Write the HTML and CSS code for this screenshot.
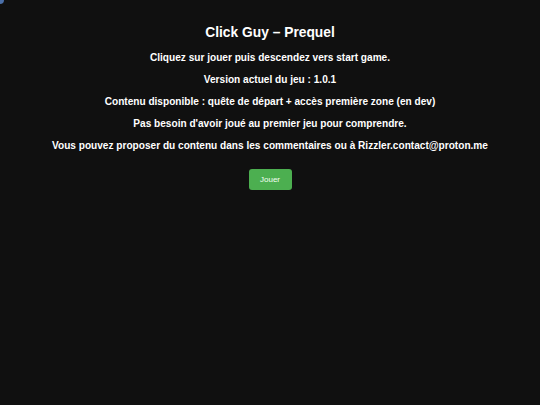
FILE: index.html
```html
<!DOCTYPE html>
<html lang="fr">
<head>
<meta charset="utf-8">
<title>Click Guy – Prequel</title>
<link rel="stylesheet" href="styles.css">
</head>
<body>
<span class="corner"></span>
<main class="page">
  <h1 class="title">Click Guy – Prequel</h1>
  <p class="line">Cliquez sur jouer puis descendez vers start game.</p>
  <p class="line">Version actuel du jeu : 1.0.1</p>
  <p class="line">Contenu disponible : quête de départ + accès première zone (en dev)</p>
  <p class="line">Pas besoin d'avoir joué au premier jeu pour comprendre.</p>
  <p class="line">Vous pouvez proposer du contenu dans les commentaires ou à Rizzler.contact@proton.me</p>
  <button class="play">Jouer</button>
</main>
</body>
</html>
```
FILE: styles.css
```css
html, body {
  margin: 0;
  padding: 0;
  background: #101010;
  height: 100%;
}
body {
  font-family: "Liberation Sans", Arial, sans-serif;
  color: #ffffff;
  position: relative;
}
.corner {
  position: absolute;
  left: -4px;
  top: -4px;
  width: 8px;
  height: 8px;
  border-radius: 50%;
  background: #4b6fa8;
}
.page {
  display: flex;
  flex-direction: column;
  align-items: center;
  padding-top: 24px;
  text-align: center;
}
.title {
  margin: 0 0 10px;
  font-size: 13.8px;
  font-weight: bold;
  line-height: 18px;
}
.line {
  margin: 0 0 10px;
  font-size: 10.1px;
  font-weight: bold;
  line-height: 12px;
}
.play {
  margin-top: 7px;
  width: 43px;
  height: 21px;
  padding: 0;
  border: none;
  border-radius: 3px;
  background: #4caf50;
  color: #f4fff4;
  font-family: "Liberation Sans", Arial, sans-serif;
  font-size: 8px;
  cursor: pointer;
}
```
